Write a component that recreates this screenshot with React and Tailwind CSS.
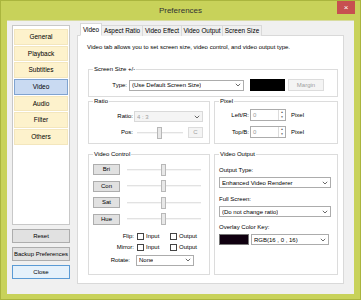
import React from 'react'

const Chevron = () => (
  <svg width="6" height="4" viewBox="0 0 6 4" className="shrink-0">
    <polyline points="0.8,0.8 3,3 5.2,0.8" fill="none" stroke="#444" strokeWidth="0.8" />
  </svg>
)

function Select({ w, text, disabled }) {
  return (
    <div
      className={`h-[11px] ${w} flex items-center justify-between px-[2px] border ${
        disabled ? 'bg-[#f4f4f4] border-[#d9d9d9] text-[#a0a0a0]' : 'bg-white border-[#acacac] text-black'
      }`}
    >
      <span className="leading-[8px] truncate">{text}</span>
      <Chevron />
    </div>
  )
}

function Group({ label, className, children }) {
  return (
    <div className={`relative border border-[#dcdcdc] ${className}`}>
      <span className="absolute -top-[5px] left-[4px] bg-white px-[1px] leading-[8px]">{label}</span>
      {children}
    </div>
  )
}

function Slider({ w, at }) {
  return (
    <div className={`relative h-[12px] ${w} flex items-center`}>
      <div className="w-full h-[2px] bg-[#e2e2e2] border-b border-[#f5f5f5]" />
      <div
        className="absolute top-0 w-[5px] h-[12px] bg-[#e8e8e8] border border-[#b8b8b8]"
        style={{ left: at }}
      />
    </div>
  )
}

function Spin() {
  return (
    <div className="h-[12px] w-[36px] flex border border-[#acacac] bg-white">
      <span className="flex-1 pl-[2px] leading-[10px] text-[#999]">0</span>
      <div className="w-[7px] flex flex-col border-l border-[#dcdcdc]">
        <span className="flex-1 flex items-center justify-center text-[3px] text-[#555]">▲</span>
        <span className="flex-1 flex items-center justify-center text-[3px] text-[#555]">▼</span>
      </div>
    </div>
  )
}

const navItems = ['General', 'Playback', 'Subtitles', 'Video', 'Audio', 'Filter', 'Others']
const tabs = [
  { name: 'Video', w: 'w-[22px]' },
  { name: 'Aspect Ratio', w: 'w-[41px]' },
  { name: 'Video Effect', w: 'w-[39px]' },
  { name: 'Video Output', w: 'w-[41px]' },
  { name: 'Screen Size', w: 'w-[39px]' },
]

export default function App() {
  return (
    <div className="w-[361px] h-[300px] bg-[#c8d25a] border border-[#aab53e] flex flex-col font-['Liberation_Sans',Arial,sans-serif] text-[6px] text-black">
      <div className="relative h-[19px] flex items-center justify-center">
        <span className="text-[8px] text-[#333]">Preferences</span>
        <div className="absolute right-[5px] top-0 w-[18px] h-[13px] bg-[#c75050] flex items-center justify-center text-white text-[8px] leading-none">
          ×
        </div>
      </div>

      <div className="mx-[6px] h-[274px] bg-[#f0f0f0] border-t border-[#d8dca0] flex pl-[5px] pt-[4px]">
        {/* left navigation */}
        <div className="w-[58px] flex flex-col">
          <div className="h-[200px] bg-white border border-[#c8c8c8] px-[1px] pt-[3px] flex flex-col gap-[1px]">
            {navItems.map(n => (
              <div
                key={n}
                className={`h-[15.7px] flex items-center justify-center text-[6.5px] border ${
                  n === 'Video' ? 'bg-[#c9daf2] border-[#7fa3d0]' : 'bg-[#fdf2cc] border-[#f3e6bd]'
                }`}
              >
                {n}
              </div>
            ))}
          </div>
          <div className="mt-[4px] flex flex-col gap-[4px]">
            <div className="h-[14px] flex items-center justify-center bg-[#e1e1e1] border border-[#adadad]">Reset</div>
            <div className="h-[14px] flex items-center justify-center bg-[#e1e1e1] border border-[#adadad] whitespace-nowrap overflow-hidden">Backup Preferences</div>
            <div className="h-[14px] flex items-center justify-center bg-[#e5f1fb] border border-[#5b9bd5]">Close</div>
          </div>
        </div>

        {/* tabs */}
        <div className="ml-[7px] -mt-[2px] flex flex-col">
          <div className="flex items-end pl-[3px] h-[13px] relative z-10">
            {tabs.map((t, i) => (
              <div
                key={t.name}
                className={`${t.w} flex items-center justify-center whitespace-nowrap text-[6.4px] border border-[#d9d9d9] ${
                  i === 0 ? 'h-[13px] bg-white border-b-white' : 'h-[11px] bg-[#f0f0f0] border-l-0 border-b-0'
                }`}
              >
                {t.name}
              </div>
            ))}
          </div>
          <div className="-mt-[1px] w-[267px] h-[249px] bg-white border border-[#d9d9d9] pl-[9px] pt-[7px]">
            <p className="leading-[8px] whitespace-nowrap">
              Video tab allows you to set screen size, video control, and video output type.
            </p>

            <div className="ml-[1px] w-[250px]">
              <Group label="Screen Size +/-" className="mt-[18px] h-[28px]">
                <div className="pt-[9px] flex items-center h-[21px]">
                  <span className="w-[38px] text-right">Type:</span>
                  <div className="ml-[2px]">
                    <Select w="w-[115px]" text="(Use Default Screen Size)" />
                  </div>
                  <div className="ml-[6px] w-[35px] h-[12px] bg-black" />
                  <div className="ml-[3px] w-[36px] h-[12px] flex items-center justify-center bg-[#f4f4f4] border border-[#dcdcdc] text-[#a0a0a0]">
                    Margin
                  </div>
                </div>
              </Group>

              <div className="mt-[4px] flex gap-[4px]">
                <Group label="Ratio" className="w-[122px] h-[43px]">
                  <div className="pt-[9px] flex items-center">
                    <span className="w-[44px] text-right">Ratio:</span>
                    <div className="ml-[1px]">
                      <Select w="w-[69px]" text="4 : 3" disabled />
                    </div>
                  </div>
                  <div className="mt-[5px] flex items-center h-[11px]">
                    <span className="w-[44px] text-right">Pos:</span>
                    <div className="ml-[4px]">
                      <Slider w="w-[46px]" at="20px" />
                    </div>
                    <div className="ml-[5px] w-[15px] h-[11px] flex items-center justify-center bg-[#f4f4f4] border border-[#dcdcdc] text-[#a0a0a0]">
                      C
                    </div>
                  </div>
                </Group>
                <Group label="Pixel" className="w-[124px] h-[43px]">
                  <div className="pt-[7px] flex items-center">
                    <span className="w-[34px] text-right">Left/R:</span>
                    <div className="ml-[1px]"><Spin /></div>
                    <span className="ml-[5px]">Pixel</span>
                  </div>
                  <div className="mt-[5px] flex items-center">
                    <span className="w-[34px] text-right">Top/B:</span>
                    <div className="ml-[1px]"><Spin /></div>
                    <span className="ml-[5px]">Pixel</span>
                  </div>
                </Group>
              </div>

              <div className="mt-[10px] flex gap-[4px]">
                <Group label="Video Control" className="w-[122px] h-[121px]">
                  <div className="pt-[9px] pl-[4px] flex flex-col gap-[5.5px]">
                    {['Bri', 'Con', 'Sat', 'Hue'].map(b => (
                      <div key={b} className="flex items-center h-[11px]">
                        <div className="w-[27px] h-[11px] flex items-center justify-center bg-[#e1e1e1] border border-[#adadad]">
                          {b}
                        </div>
                        <div className="ml-[7px]">
                          <Slider w="w-[74px]" at="34px" />
                        </div>
                      </div>
                    ))}
                  </div>
                  {['Flip:', 'Mirror:'].map((l, i) => (
                    <div key={l} className={`${i === 0 ? 'mt-[7px]' : 'mt-[1px]'} h-[10px] flex items-center`}>
                      <span className="w-[45px] text-right">{l}</span>
                      <div className="ml-[3px] w-[7px] h-[7px] bg-white border border-[#444]" />
                      <span className="ml-[2px] w-[22px]">Input</span>
                      <div className="ml-[2px] w-[7px] h-[7px] bg-white border border-[#444]" />
                      <span className="ml-[2px]">Output</span>
                    </div>
                  ))}
                  <div className="mt-[2px] flex items-center">
                    <span className="w-[41px] text-right">Rotate:</span>
                    <div className="ml-[6px]">
                      <Select w="w-[58px]" text="None" />
                    </div>
                  </div>
                </Group>

                <Group label="Video Output" className="w-[124px] h-[121px]">
                  <div className="pt-[11px] pl-[4px] flex flex-col">
                    <span className="leading-[8px]">Output Type:</span>
                    <div className="mt-[3px]">
                      <Select w="w-[112px]" text="Enhanced Video Renderer" />
                    </div>
                    <span className="mt-[7px] leading-[8px]">Full Screen:</span>
                    <div className="mt-[3px]">
                      <Select w="w-[112px]" text="(Do not change ratio)" />
                    </div>
                    <span className="mt-[6px] leading-[8px]">Overlay Color Key:</span>
                    <div className="mt-[3px] flex items-center">
                      <div className="w-[30px] h-[11px] bg-[#100010] border border-[#777]" />
                      <div className="ml-[2px]">
                        <Select w="w-[78px]" text="RGB(16 , 0 , 16)" />
                      </div>
                    </div>
                  </div>
                </Group>
              </div>
            </div>
          </div>
        </div>
      </div>
    </div>
  )
}
